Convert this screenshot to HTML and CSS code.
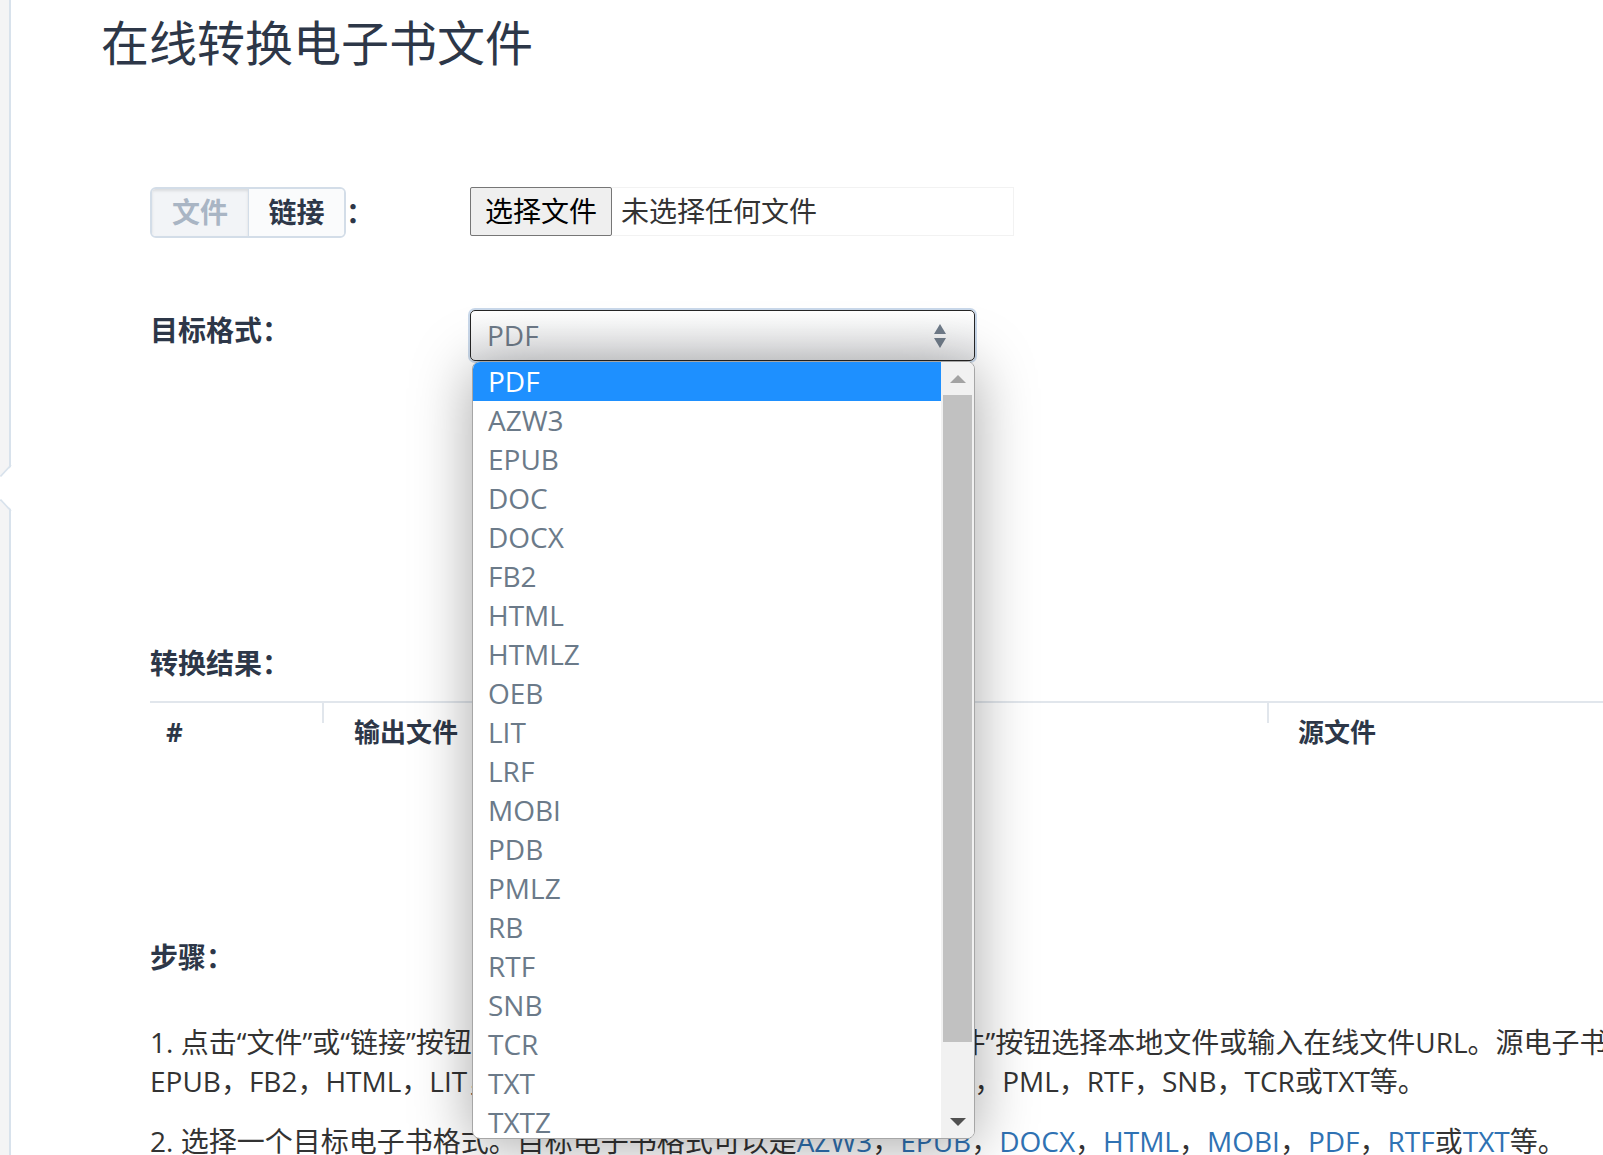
FILE: index.html
```html
<!DOCTYPE html>
<html lang="zh-CN">
<head>
<meta charset="utf-8">
<title>在线转换电子书文件</title>
<link rel="stylesheet" href="styles.css">
</head>
<body>
<div class="page">
  <aside class="edge">
    <svg class="edge-handle" viewBox="0 0 13 50" width="13" height="50" aria-hidden="true">
      <polygon points="13,2 0,14 0,36 13,48" fill="#ffffff"/>
      <polyline points="11,2 0.5,13.5" fill="none" stroke="#d8e2ec" stroke-width="1.6"/>
      <polyline points="0.5,36.5 11,48" fill="none" stroke="#d8e2ec" stroke-width="1.6"/>
    </svg>
  </aside>
  <main class="main">
    <h1 class="title">在线转换电子书文件</h1>
    <div class="form">
      <div class="row row-source">
        <div class="label-cell">
          <div class="seg">
            <span class="seg-btn seg-active">文件</span>
            <span class="seg-btn">链接</span>
          </div>
          <span class="colon">：</span>
        </div>
        <div class="file-input">
          <span class="file-btn">选择文件</span>
          <span class="file-name">未选择任何文件</span>
        </div>
      </div>

      <div class="row row-format">
        <div class="label-cell"><span class="label">目标格式：</span></div>
        <div class="select-wrap">
          <div class="select">
            <span class="select-value">PDF</span>
            <svg class="select-arrows" viewBox="0 0 12 24" width="12" height="24" aria-hidden="true">
              <polygon points="6,0 12,10 0,10" fill="#707c8a"/>
              <polygon points="0,14 12,14 6,24" fill="#707c8a"/>
            </svg>
          </div>
          <div class="dropdown">
            <ul class="options">
              <li class="option selected">PDF</li>
              <li class="option">AZW3</li>
              <li class="option">EPUB</li>
              <li class="option">DOC</li>
              <li class="option">DOCX</li>
              <li class="option">FB2</li>
              <li class="option">HTML</li>
              <li class="option">HTMLZ</li>
              <li class="option">OEB</li>
              <li class="option">LIT</li>
              <li class="option">LRF</li>
              <li class="option">MOBI</li>
              <li class="option">PDB</li>
              <li class="option">PMLZ</li>
              <li class="option">RB</li>
              <li class="option">RTF</li>
              <li class="option">SNB</li>
              <li class="option">TCR</li>
              <li class="option">TXT</li>
              <li class="option">TXTZ</li>
            </ul>
            <div class="scrollbar">
              <div class="sb-btn">
                <svg viewBox="0 0 16 8" width="16" height="8" aria-hidden="true"><polygon points="8,0 16,8 0,8" fill="#a3a3a3"/></svg>
              </div>
              <div class="sb-thumb"></div>
              <div class="sb-fill"></div>
              <div class="sb-btn">
                <svg viewBox="0 0 16 8" width="16" height="8" aria-hidden="true"><polygon points="0,0 16,0 8,8" fill="#505050"/></svg>
              </div>
            </div>
          </div>
        </div>
      </div>

      <div class="label result-label">转换结果：</div>
      <table class="result-table">
        <thead>
          <tr>
            <th class="col-num">#</th>
            <th class="col-out">输出文件</th>
            <th class="col-src">源文件</th>
          </tr>
        </thead>
        <tbody></tbody>
      </table>

      <div class="label steps-label">步骤：</div>
      <p class="step step-1">1. 点击“文件”或“链接”按钮切换文件来源方式，然后再点击“选择文件”按钮选择本地文件或输入在线文件URL。源电子书格式可以是AZW，AZW3，AZW4，CBZ，CBR，CBC，CHM，DJVU，DOCX，<br>EPUB，FB2，HTML，LIT，LRF，MOBI，ODT，OEB，PDB，PDF，PML，RTF，SNB，TCR或TXT等。</p>
      <p class="step step-2">2. 选择一个目标电子书格式。目标电子书格式可以是<a href="#">AZW3</a>，<a href="#">EPUB</a>，<a href="#">DOCX</a>，<a href="#">HTML</a>，<a href="#">MOBI</a>，<a href="#">PDF</a>，<a href="#">RTF</a>或<a href="#">TXT</a>等。</p>
    </div>
  </main>
</div>
</body>
</html>
```

FILE: styles.css
```css
* { box-sizing: border-box; }

html, body {
  margin: 0;
  height: 100%;
}

body {
  font-family: "Open Sans", "Noto Sans CJK SC", sans-serif;
  font-size: 28px;
  line-height: 1.4;
  color: #333;
  background: #fff;
  overflow: hidden;
}

.page {
  display: flex;
  min-height: 100vh;
}

.edge {
  position: relative;
  flex: 0 0 11px;
  background: #f4f4f5;
  border-right: 2px solid #d8e2ec;
}

.edge-handle {
  position: absolute;
  left: 0;
  top: 463px;
  display: block;
}

.main {
  flex: 1 0 auto;
  padding-left: 90px;
}

.title {
  margin: 0;
  padding-top: 15px;
  font-size: 48px;
  line-height: 56px;
  font-weight: 400;
  color: #2d3748;
}

.form {
  padding-left: 49px;
  width: 1760px;
}

.row {
  display: flex;
  align-items: flex-start;
}

.row-source { margin-top: 116px; }
.row-format { margin-top: 72px; }

.label-cell {
  flex: 0 0 320px;
  display: flex;
  align-items: center;
}

/* segmented toggle */
.seg {
  display: flex;
  height: 51px;
  border: 2px solid #d3dde8;
  border-radius: 6px;
  overflow: hidden;
}

.seg-btn {
  width: 96px;
  display: flex;
  align-items: center;
  justify-content: center;
  font-weight: 700;
  color: #2d3748;
  background: #fafbfc;
}

.seg-btn + .seg-btn { border-left: 1px solid #d3dde8; }

.seg-active {
  color: #a9b5c4;
  background: #f2f4f7;
  box-shadow: inset 0 2px 3px rgba(0, 0, 0, 0.1);
}

.colon {
  font-weight: 700;
  color: #2d3748;
}

/* file input */
.file-input {
  display: flex;
  align-items: center;
  width: 544px;
  height: 49px;
  border: 1px solid #f2f2f2;
  border-left: none;
}

.file-btn {
  flex: 0 0 142px;
  height: 49px;
  margin-top: -1px;
  margin-bottom: -1px;
  border: 1px solid #767676;
  border-radius: 2px;
  background: #efefef;
  color: #000;
  line-height: 47px;
  text-align: center;
}

.file-name {
  margin-left: 9px;
  color: #333;
}

/* select */
.label {
  font-weight: 700;
  color: #2d3748;
  line-height: 40px;
}

.select-wrap {
  position: relative;
  width: 505px;
}

.select {
  height: 51px;
  display: flex;
  align-items: center;
  justify-content: space-between;
  padding: 0 28px 0 16px;
  border: 1px solid #262626;
  border-radius: 5px;
  background: linear-gradient(#ffffff, #e5e6e8);
  box-shadow: 0 0 0 2px #c9d8ea;
  color: #6e7a88;
}

.select-arrows { display: block; }

.dropdown {
  position: absolute;
  top: 51px;
  left: 2px;
  width: 503px;
  height: 778px;
  display: flex;
  background: #fff;
  border: 1px solid #a6a6a6;
  border-radius: 8px;
  overflow: hidden;
  box-shadow: 0 6px 60px rgba(0, 0, 0, 0.35);
  z-index: 10;
}

.options {
  flex: 1;
  margin: 0;
  padding: 0;
  list-style: none;
}

.option {
  height: 39px;
  line-height: 39px;
  padding-left: 15px;
  color: #6b7a89;
}

.option.selected {
  background: #1e90ff;
  color: #fff;
}

.scrollbar {
  flex: 0 0 33px;
  display: flex;
  flex-direction: column;
  background: #f1f1f1;
}

.sb-btn {
  flex: 0 0 33px;
  display: flex;
  align-items: center;
  justify-content: center;
}

.sb-btn svg { display: block; }

.sb-thumb {
  flex: 0 0 647px;
  margin: 0 2px;
  background: #c1c1c1;
}

.sb-fill { flex: 1; }

/* results */
.result-label { margin-top: 281.5px; }

.result-table {
  margin-top: 18.5px;
  width: 1700px;
  table-layout: fixed;
  border-collapse: collapse;
}

.result-table th {
  position: relative;
  text-align: left;
  font-size: 26px;
  font-weight: 700;
  color: #2d3748;
  line-height: 39.2px;
  padding: 10px 0 10px 32px;
  border-top: 2px solid #e1e6ec;
}

.result-table .col-num { width: 172px; padding-left: 16px; }
.result-table .col-out { width: 945px; }
.result-table .col-src { padding-left: 31px; }

.result-table .col-out::before,
.result-table .col-src::before {
  content: "";
  position: absolute;
  left: 0;
  top: 0;
  width: 2px;
  height: 20px;
  background: #e1e6ec;
}

/* steps */
.steps-label { margin-top: 175px; }

.step {
  margin: 0;
  white-space: nowrap;
}

.step-1 { margin-top: 46px; }
.step-2 { margin-top: 20px; }

.step a {
  color: #2f72b3;
  text-decoration: none;
}
```
